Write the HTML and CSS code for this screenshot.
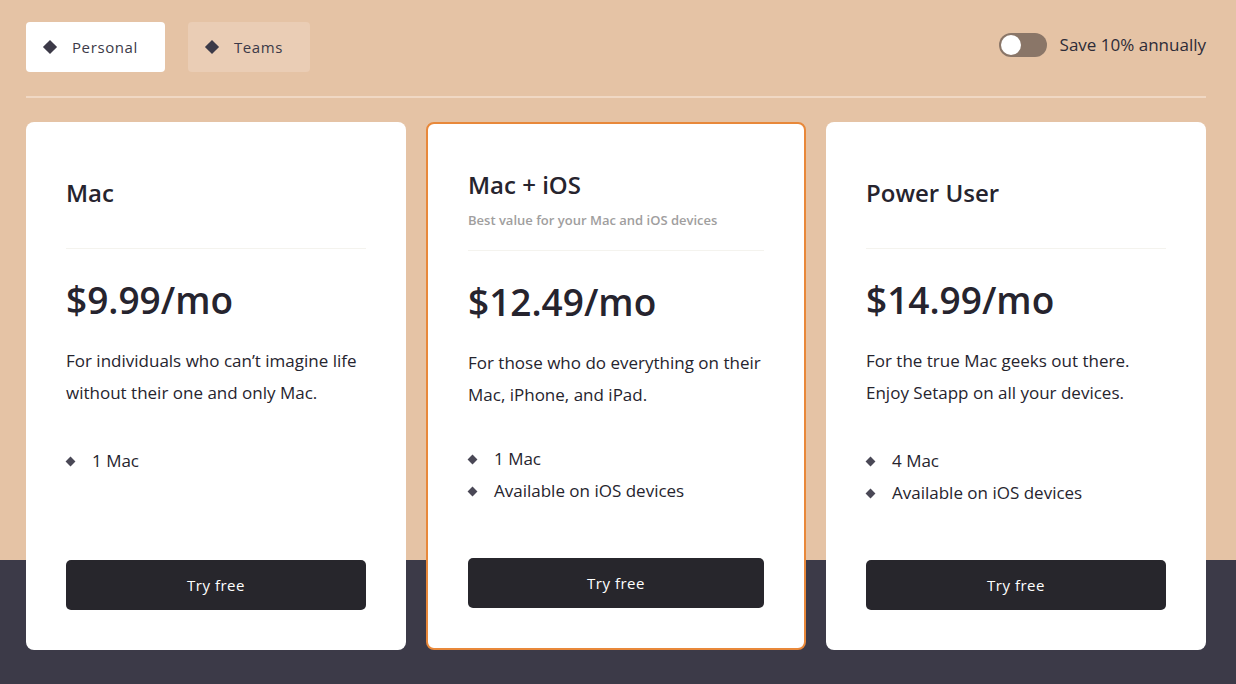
FILE: index.html
```html
<!DOCTYPE html>
<html lang="en">
<head>
  <meta charset="UTF-8">
  <meta name="viewport" content="width=device-width, initial-scale=1.0">
  <title>Pricing</title>
  <link rel="stylesheet" href="styles.css">
</head>
<body>
  <div class="page">
    <div class="top-bar">
      <div class="tabs">
        <div class="tab active"><span class="diamond"></span>Personal</div>
        <div class="tab"><span class="diamond"></span>Teams</div>
      </div>
      <label class="annual">
        <span class="switch"><span class="knob"></span></span>
        Save 10% annually
      </label>
    </div>

    <div class="plans">
      <div class="plan">
        <div class="plan-head">
          <h3>Mac</h3>
        </div>
        <div class="price">$9.99/mo</div>
        <p class="desc">For individuals who can’t imagine life without their one and only Mac.</p>
        <ul class="features">
          <li>1 Mac</li>
        </ul>
        <button class="try">Try free</button>
      </div>

      <div class="plan featured">
        <div class="plan-head">
          <h3>Mac + iOS</h3>
          <div class="sub">Best value for your Mac and iOS devices</div>
        </div>
        <div class="price">$12.49/mo</div>
        <p class="desc">For those who do everything on their Mac, iPhone, and iPad.</p>
        <ul class="features">
          <li>1 Mac</li>
          <li>Available on iOS devices</li>
        </ul>
        <button class="try">Try free</button>
      </div>

      <div class="plan">
        <div class="plan-head">
          <h3>Power User</h3>
        </div>
        <div class="price">$14.99/mo</div>
        <p class="desc">For the true Mac geeks out there. Enjoy Setapp on all your devices.</p>
        <ul class="features">
          <li>4 Mac</li>
          <li>Available on iOS devices</li>
        </ul>
        <button class="try">Try free</button>
      </div>
    </div>
  </div>
</body>
</html>
```

FILE: styles.css
```css
body {
  margin: 0;
  height: 684px;
  background: linear-gradient(to bottom, #e5c3a5 560px, #3c3a48 560px);
  font-family: "Open Sans", Arial, sans-serif;
  color: #26242e;
}

.page {
  padding: 22px 30px 0 26px;
}

.top-bar {
  display: flex;
  align-items: center;
  justify-content: space-between;
  padding-bottom: 24px;
  border-bottom: 2px solid #f0d8c4;
  margin-bottom: 24px;
}

.tabs {
  display: flex;
  gap: 23px;
}

.tab {
  display: flex;
  align-items: center;
  height: 50px;
  padding: 0 27px 0 17px;
  border-radius: 4px;
  background-color: #eacdb5;
  color: #3c3a48;
  font-size: 15px;
  letter-spacing: 0.6px;
  cursor: pointer;
}

.tab.active {
  background-color: #fff;
}

.diamond {
  width: 10px;
  height: 10px;
  margin: 0 17px 0 2px;
  background-color: #3c3a48;
  transform: rotate(45deg);
}

.annual {
  display: flex;
  align-items: center;
  gap: 13px;
  margin-top: -5px;
  font-size: 17px;
  color: #2d2b38;
}

.switch {
  width: 48px;
  height: 24px;
  border-radius: 12px;
  background-color: #8a7668;
  display: flex;
  align-items: center;
  padding-left: 2px;
  box-sizing: border-box;
}

.knob {
  width: 20px;
  height: 20px;
  border-radius: 50%;
  background-color: #fff;
}

.plans {
  display: grid;
  grid-template-columns: repeat(3, 1fr);
  gap: 20px;
}

.plan {
  display: flex;
  flex-direction: column;
  height: 528px;
  box-sizing: border-box;
  padding: 40px;
  background-color: #fff;
  border-radius: 8px;
}

.plan.featured {
  border: 2px solid #e8883a;
  padding: 38px 40px 40px;
}

.plan-head {
  display: flex;
  flex-direction: column;
  justify-content: center;
  height: 62px;
  padding-bottom: 24px;
  border-bottom: 1px solid #f4f3ee;
}

.featured .plan-head {
  justify-content: flex-start;
  height: 61px;
  padding-top: 7px;
  padding-bottom: 20px;
}

.plan-head h3 {
  margin: 0;
  font-size: 24px;
  font-weight: 600;
  line-height: 32px;
}

.sub {
  margin-top: 10px;
  font-size: 13px;
  font-weight: 600;
  color: #a09e9e;
}

.price {
  margin-top: 27px;
  font-size: 37px;
  font-weight: 600;
  line-height: 48px;
}

.desc {
  margin: 21px 0 0;
  font-size: 17px;
  line-height: 32px;
}

.features {
  list-style: none;
  margin: 36px 0 0;
  padding: 0;
  flex: 1;
}

.featured .features {
  margin-top: 32px;
}

.features li {
  display: flex;
  align-items: center;
  font-size: 17px;
  line-height: 32px;
}

.features li::before {
  content: "";
  width: 7px;
  height: 7px;
  margin: 0 18px 0 1px;
  background-color: #4a4856;
  transform: rotate(45deg);
}

.try {
  height: 50px;
  border: none;
  border-radius: 5px;
  background-color: #27262c;
  color: #fff;
  font-family: inherit;
  font-size: 15px;
  letter-spacing: 0.5px;
  cursor: pointer;
}
```
